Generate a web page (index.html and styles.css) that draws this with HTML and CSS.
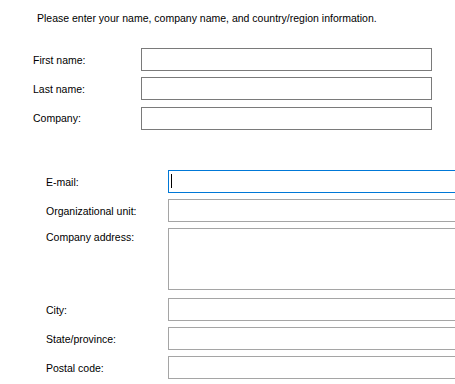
FILE: index.html
```html
<!DOCTYPE html>
<html>
	<head>
		<title>Registration information</title>
		<meta charset="utf-8">
		<link rel="stylesheet" href="styles.css">
	</head>
	<body>
		<div class="page">
			<p class="intro">Please enter your name, company name, and country/region information.</p>

			<div class="form basic">
				<label for="first">First name:</label>
				<input type="text" id="first">
				<label for="last">Last name:</label>
				<input type="text" id="last">
				<label for="company">Company:</label>
				<input type="text" id="company">
			</div>

			<div class="form details">
				<label for="email">E-mail:</label>
				<div class="field">
					<input type="text" id="email" class="active">
					<span class="caret"></span>
				</div>
				<label for="unit">Organizational unit:</label>
				<input type="text" id="unit">
				<label for="address" class="top">Company address:</label>
				<textarea id="address"></textarea>
				<label for="city">City:</label>
				<input type="text" id="city">
				<label for="state">State/province:</label>
				<input type="text" id="state">
				<label for="postal">Postal code:</label>
				<input type="text" id="postal">
			</div>
		</div>
	</body>
</html>
```

FILE: styles.css
```css
* {box-sizing: border-box;}
html, body {margin: 0; background: #fff; overflow: hidden;}
body {width: 455px; height: 384px; font-family: "Liberation Sans", Arial, sans-serif; font-size: 10.5px; color: #000;}

.page {padding-top: 11px;}
.intro {margin: 0 0 0 37px; line-height: 14px; font-size: 10.5px;}

.form {display: grid; align-items: center; row-gap: 6px;}
.form label {line-height: 13px; padding-top: 1px;}
.form input, .form textarea {
	display: block; margin: 0; padding: 0 3px;
	height: 23px; background: #fff;
	font: inherit; outline: none; resize: none;
}

.basic {margin: 23px 0 0 33px; grid-template-columns: 108px 291px;}
.basic input {border: 1px solid #7a7a7a;}
.basic input:nth-of-type(3) {margin-top: 1px;}

.details {margin: 40px 0 0 46px; grid-template-columns: 122px 300px;}
.details input, .details textarea {border: 1px solid #a5a5a5; width: 300px;}
.details textarea {height: 62px; margin-bottom: 2px;}
.details .top {align-self: start; padding-top: 3px;}
.details .active {border-color: #0078d7;}

.field {position: relative;}
.caret {position: absolute; left: 3px; top: 4px; width: 1px; height: 14px; background: #000;}
```
